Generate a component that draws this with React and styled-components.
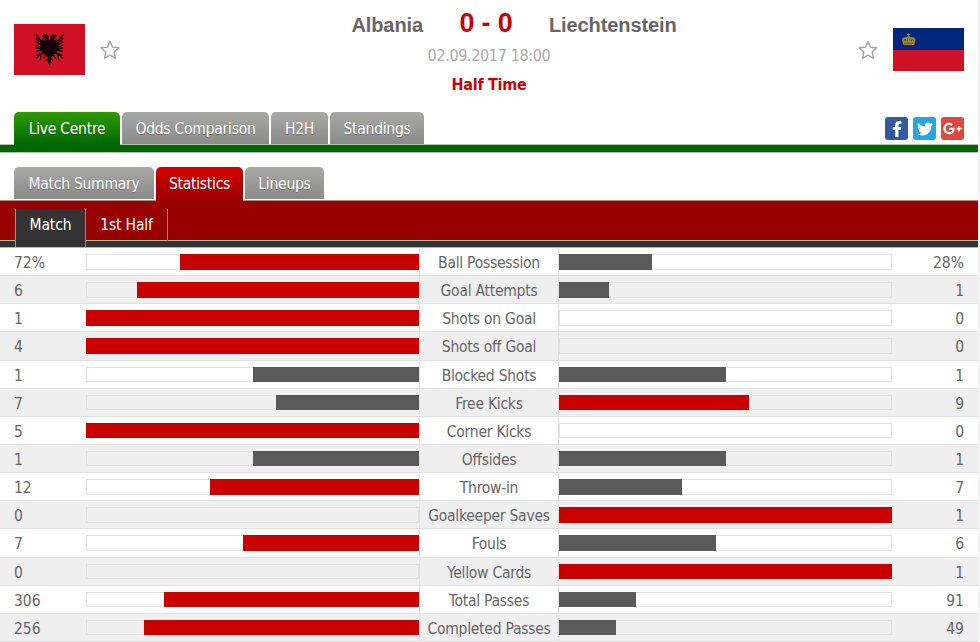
import React from 'react';
import styled, { createGlobalStyle } from 'styled-components';
import { FaFacebookF, FaTwitter, FaGooglePlusG } from 'react-icons/fa';

const GlobalStyle = createGlobalStyle`
  * {
    box-sizing: border-box;
  }

  body {
    margin: 0;
    background: #f4f4f4;
    font-family: 'DejaVu Sans Condensed', 'DejaVu Sans', sans-serif;
    font-stretch: condensed;
    font-size: 16px;
    color: #666;
    overflow: hidden;
  }
`;

const Page = styled.div`
  width: 978px;
  height: 642px;
  background: white;
  overflow: hidden;
`;

const Header = styled.header`
  height: 112px;
  display: grid;
  grid-template-columns: 130px 1fr 130px;
  padding: 0 14px;
`;

const TeamSide = styled.div`
  display: flex;
  justify-content: space-between;
  align-items: flex-start;
  flex-direction: ${({ $away }) => ($away ? 'row-reverse' : 'row')};
  width: 106px;
  padding-top: ${({ $away }) => ($away ? '28px' : '24px')};
  margin-left: ${({ $away }) => ($away ? 'auto' : '0')};

  svg {
    display: block;
  }
`;

const StarWrap = styled.span`
  margin-top: ${({ $away }) => ($away ? '12px' : '16px')};
`;

const Summary = styled.div`
  display: flex;
  flex-direction: column;
  align-items: center;
`;

const Teams = styled.div`
  display: grid;
  grid-template-columns: 1fr 126px 1fr;
  width: 100%;
  height: 46px;
  padding-top: 8px;
  padding-right: 6px;
  align-items: baseline;
  font-family: 'Liberation Sans', Arial, sans-serif;
  font-weight: bold;
`;

const TeamName = styled.span`
  font-size: 20px;
  line-height: 30px;
  letter-spacing: -0.1px;
  text-align: ${({ $align }) => $align};
`;

const Score = styled.span`
  font-size: 27px;
  line-height: 30px;
  letter-spacing: -0.2px;
  color: #c80000;
  text-align: center;
`;

const KickOff = styled.div`
  height: 20px;
  line-height: 20px;
  color: #aaa;
  letter-spacing: -0.35px;
`;

const MatchState = styled.div`
  margin-top: 9px;
  line-height: 20px;
  font-weight: bold;
  color: #c80000;
  letter-spacing: -0.3px;
`;

const TabBar = styled.nav`
  height: ${({ $height }) => $height};
  display: flex;
  align-items: flex-start;
  gap: 2px;
  padding: 0 14px;
  border-bottom: ${({ $green }) => ($green ? '7px solid #006600' : 'none')};
  box-shadow: ${({ $green }) => ($green ? 'inset 0 -1px 0 #b9c4b0' : 'none')};
`;

const backgrounds = {
  gray: 'linear-gradient(#a9aaa8, #8a8b89)',
  green: 'linear-gradient(#2e9b00, #006600)',
  red: 'linear-gradient(#d40000, #990000)',
};

const Tab = styled.a`
  width: ${({ $width }) => $width};
  height: ${({ $tone }) => ($tone === 'gray' ? '32px' : '34px')};
  border-radius: 5px 5px 0 0;
  background: ${({ $tone }) => backgrounds[$tone]};
  color: white;
  font-size: 15.5px;
  line-height: 35px;
  text-align: center;
  letter-spacing: -0.25px;
  white-space: nowrap;
  text-shadow: 0 1px 1px rgba(0, 0, 0, 0.25);
`;

const Social = styled.div`
  display: flex;
  gap: 5px;
  margin-left: auto;
  padding-top: 5px;
`;

const SocialButton = styled.a`
  width: 23px;
  height: 23px;
  border-radius: 3px;
  background: ${({ $color }) => $color};
  color: white;
  display: flex;
  align-items: center;
  justify-content: center;
`;

const Spacer = styled.div`
  height: 15px;
  border-top: 1px solid #b9c4b0;
`;

const PeriodBar = styled.nav`
  height: 48px;
  display: flex;
  padding: 8px 15px 0;
  background: #990000;
  border-top: 1px solid #a98f80;
  border-bottom: 1px solid #b9b9a4;
  box-shadow: inset 0 -6px 0 #333, inset 0 -7px 0 #b9b99f;
`;

const Period = styled.a`
  width: ${({ $width }) => $width};
  height: ${({ $active }) => ($active ? '38px' : '32px')};
  line-height: 32px;
  font-size: 15.5px;
  text-align: center;
  color: white;
  letter-spacing: -0.15px;
  background: ${({ $active }) => ($active ? '#333' : 'none')};
  border-left: ${({ $active }) => ($active ? '1px solid #a98f80' : 'none')};
  border-right: 1px solid #b97a6c;
`;

const Row = styled.div`
  height: 28.15px;
  display: grid;
  grid-template-columns: 86px 333px 140px 333px 86px;
  border-bottom: 1px solid #e0e0e0;
  background: ${({ $odd }) => ($odd ? '#efefef' : 'white')};
  line-height: 31px;
`;

const Value = styled.div`
  padding: 0 14px;
  font-size: 15.5px;
  text-align: ${({ $align }) => $align};
`;

const Label = styled.div`
  border-left: 1px solid #e0e0e0;
  border-right: 1px solid #e0e0e0;
  display: flex;
  justify-content: center;
  font-size: 15.5px;
  letter-spacing: -0.25px;
  white-space: nowrap;
`;

const Track = styled.div`
  height: 15.5px;
  margin-top: 6px;
  display: flex;
  justify-content: ${({ $home }) => ($home ? 'flex-end' : 'flex-start')};
  box-shadow: inset 0 0 0 1px #e0e0e0;
`;

const Bar = styled.div`
  height: 100%;
  background: ${({ $winner }) => ($winner ? '#c80000' : '#5a5a5a')};
`;

const Star = () => (
  <svg width="20" height="20" viewBox="0 0 20 20">
    <path
      d="M10 1.3 L12.5 7.1 L18.9 7.8 L14.1 12 L15.5 18.3 L10 15.2 L4.5 18.3 L5.9 12 L1.1 7.8 L7.5 7.1 Z"
      fill="white"
      stroke="#a3a3a3"
      strokeWidth="1.4"
      strokeLinejoin="round"
    />
  </svg>
);

const AlbaniaFlag = () => (
  <svg width="71" height="51" viewBox="0 0 71 51">
    <rect width="71" height="51" fill="#d01126" />
    <g fill="#16030a" stroke="#16030a" strokeLinejoin="round">
      <path
        strokeWidth=".4"
        d="M35.5 17 L34.2 15 L34.5 12.5 Q33 9.8 30 10.8 L28 12.2 L30.5 12.8 L29.5 14.5 L31.5 15 L31 17 L28.5 15.5 L27 18 L27.5 26 L29 28 L26 31 L31 29.5 L32.5 32 L34 33 L34 37 L35.5 41 L37 37 L37 33 L38.5 32 L40 29.5 L45 31 L42 28 L43.5 26 L44 18 L42.5 15.5 L40 17 L39.5 15 L41.5 14.5 L40.5 12.8 L43 12.2 L41 10.8 Q38 9.8 36.5 12.5 L36.8 15 Z"
      />
      <path
        fill="none"
        strokeWidth="1.3"
        d="M28 18 L21.8 10.5 M28 20 L21.8 14 M28 22 L21.8 17.3 M28 24 L21.8 20.7 M28 25 L21.8 24 M28 26 L22.3 27.3 M43 18 L49.2 10.5 M43 20 L49.2 14 M43 22 L49.2 17.3 M43 24 L49.2 20.7 M43 25 L49.2 24 M43 26 L48.7 27.3"
      />
      <path
        fill="none"
        strokeWidth="1.1"
        d="M29 28.5 L22.5 31.5 M26 30 L22.5 34.5 M27 31 L26.5 35.5 M42 28.5 L48.5 31.5 M45 30 L48.5 34.5 M44 31 L44.5 35.5 M31.5 31 L29.5 34.5 M39.5 31 L41.5 34.5 M34.5 34 L32 37 M36.5 34 L39 37"
      />
    </g>
  </svg>
);

const LiechtensteinFlag = () => (
  <svg width="71" height="43" viewBox="0 0 71 43">
    <rect width="71" height="22" fill="#002780" />
    <rect y="22" width="71" height="21" fill="#cf1126" />
    <g fill="#a18a3a">
      <path d="M10.5 17 L9 12.5 Q9 9.2 12 9.2 L14.5 9 L15.7 7.5 L17 9 L19.5 9.2 Q22.5 9.2 22.5 12.5 L21 17 Z" />
      <rect x="15.2" y="5.4" width="1" height="3" />
      <rect x="14.2" y="6.2" width="3" height="0.9" />
    </g>
    <path
      d="M11 13 L12 11 L13.2 13 M14.5 13 V10.5 M17 13 V10.5 M18.2 13 L19.4 11 L20.5 13 M11 15.2 H20.5"
      fill="none"
      stroke="#4a4044"
      strokeWidth="0.8"
    />
  </svg>
);

const stats = [
  { label: 'Ball Possession', home: '72%', away: '28%', homePct: 71.7, awayPct: 28 },
  { label: 'Goal Attempts', home: 6, away: 1, homePct: 84.7, awayPct: 15 },
  { label: 'Shots on Goal', home: 1, away: 0, homePct: 100, awayPct: 0 },
  { label: 'Shots off Goal', home: 4, away: 0, homePct: 100, awayPct: 0 },
  { label: 'Blocked Shots', home: 1, away: 1, homePct: 50, awayPct: 50 },
  { label: 'Free Kicks', home: 7, away: 9, homePct: 42.8, awayPct: 57 },
  { label: 'Corner Kicks', home: 5, away: 0, homePct: 100, awayPct: 0 },
  { label: 'Offsides', home: 1, away: 1, homePct: 50, awayPct: 50 },
  { label: 'Throw-in', home: 12, away: 7, homePct: 62.8, awayPct: 37 },
  { label: 'Goalkeeper Saves', home: 0, away: 1, homePct: 0, awayPct: 100 },
  { label: 'Fouls', home: 7, away: 6, homePct: 53, awayPct: 47 },
  { label: 'Yellow Cards', home: 0, away: 1, homePct: 0, awayPct: 100 },
  { label: 'Total Passes', home: 306, away: 91, homePct: 76.6, awayPct: 23 },
  { label: 'Completed Passes', home: 256, away: 49, homePct: 82.6, awayPct: 17 },
];

const StatRow = ({ stat, odd }) => (
  <Row $odd={odd}>
    <Value $align="left">{stat.home}</Value>
    <Track $home>
      <Bar $winner={stat.homePct > stat.awayPct} style={{ width: `${stat.homePct}%` }} />
    </Track>
    <Label>{stat.label}</Label>
    <Track>
      <Bar $winner={stat.awayPct > stat.homePct} style={{ width: `${stat.awayPct}%` }} />
    </Track>
    <Value $align="right">{stat.away}</Value>
  </Row>
);

const App = () => {
  return (
    <>
      <GlobalStyle />
      <Page>
        <Header>
          <TeamSide>
            <AlbaniaFlag />
            <StarWrap><Star /></StarWrap>
          </TeamSide>
          <Summary>
            <Teams>
              <TeamName $align="right">Albania</TeamName>
              <Score>0 - 0</Score>
              <TeamName $align="left">Liechtenstein</TeamName>
            </Teams>
            <KickOff>02.09.2017 18:00</KickOff>
            <MatchState>Half Time</MatchState>
          </Summary>
          <TeamSide $away>
            <LiechtensteinFlag />
            <StarWrap $away><Star /></StarWrap>
          </TeamSide>
        </Header>

        <TabBar $green $height="40px">
          <Tab $tone="green" $width="106px">Live Centre</Tab>
          <Tab $tone="gray" $width="147px">Odds Comparison</Tab>
          <Tab $tone="gray" $width="57px">H2H</Tab>
          <Tab $tone="gray" $width="94px">Standings</Tab>
          <Social>
            <SocialButton $color="#335a9f"><FaFacebookF size={16} /></SocialButton>
            <SocialButton $color="#27a6df"><FaTwitter size={16} /></SocialButton>
            <SocialButton $color="#dc4a3e"><FaGooglePlusG size={19} /></SocialButton>
          </Social>
        </TabBar>

        <Spacer />

        <TabBar $height="33px">
          <Tab $tone="gray" $width="140px">Match Summary</Tab>
          <Tab $tone="red" $width="87px">Statistics</Tab>
          <Tab $tone="gray" $width="79px">Lineups</Tab>
        </TabBar>
        <PeriodBar>
          <Period $active $width="71px">Match</Period>
          <Period $width="82px">1st Half</Period>
        </PeriodBar>

        {stats.map((stat, i) => (
          <StatRow key={stat.label} stat={stat} odd={i % 2 === 1} />
        ))}
      </Page>
    </>
  );
};

export default App;
